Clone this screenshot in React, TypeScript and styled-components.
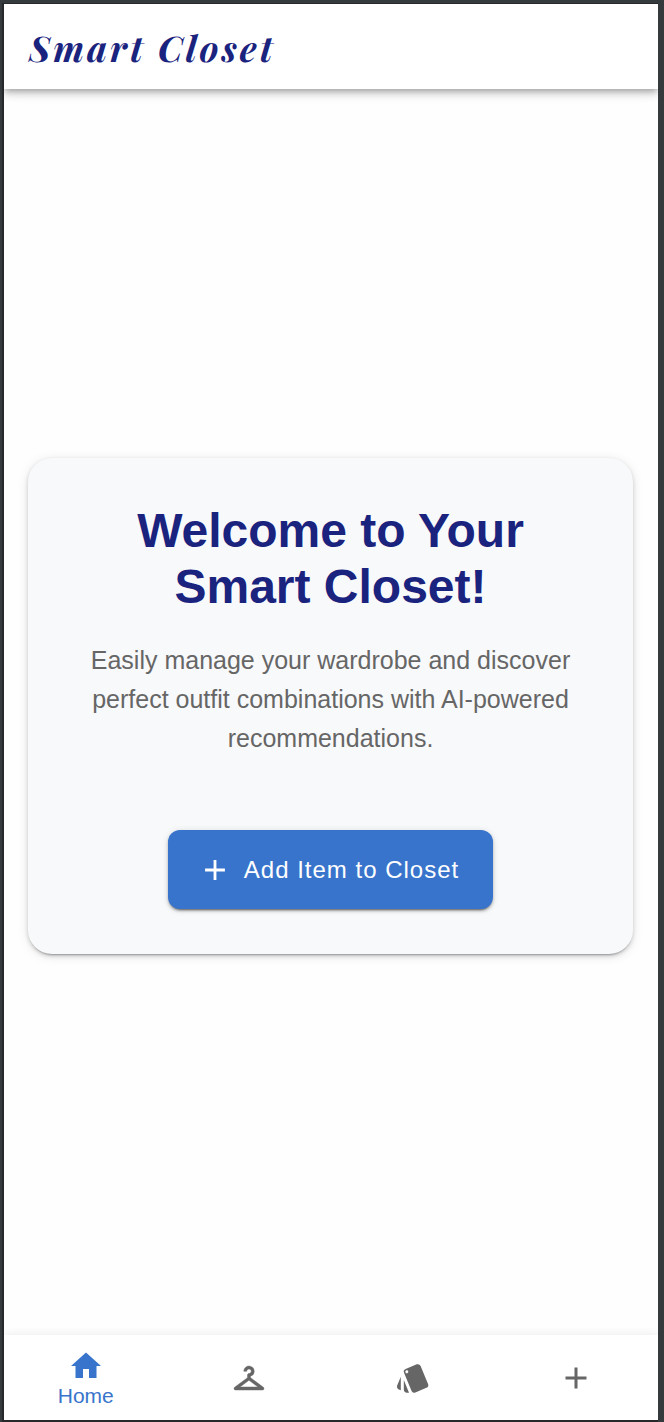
import React from "react";
import styled, { createGlobalStyle } from "styled-components";
import { MdAdd, MdCheckroom, MdHome, MdStyle } from "react-icons/md";

const GlobalStyle = createGlobalStyle`
  *, *::before, *::after { box-sizing: border-box; }
  body {
    margin: 0;
    background: #353a3d;
    font-family: "Liberation Sans", Arial, sans-serif;
  }
`;

const Backdrop = styled.div`
  display: flex;
  min-height: 100vh;
  padding: 3px 6px 0 2px;
`;

const Screen = styled.div`
  display: flex;
  flex: 1;
  flex-direction: column;
  border: solid #272829;
  border-width: 1px 0 2px 2px;
  background: #fefefe;
`;

const Header = styled.header`
  display: flex;
  align-items: center;
  height: 85px;
  padding: 0 25px;
  background: #fff;
  box-shadow: 0 3px 6px -1px rgba(0, 0, 0, 0.26), 0 6px 8px rgba(0, 0, 0, 0.1),
    0 1px 15px rgba(0, 0, 0, 0.08);
  clip-path: inset(0 0 -24px 0);
`;

const Brand = styled.a`
  color: #1a237e;
  font: italic 700 36px/48px "Playfair Display", "Liberation Serif", serif;
  letter-spacing: 3px;
  text-decoration: none;
`;

const Main = styled.main`
  display: flex;
  flex: 1;
  flex-direction: column;
  justify-content: center;
  padding: 24px 25px 36px 24px;
`;

const Card = styled.section`
  display: flex;
  flex-direction: column;
  align-items: center;
  padding: 45px;
  border-radius: 24px;
  background: #f8f9fb;
  text-align: center;
  box-shadow: 0 3px 2px -2px rgba(0, 0, 0, 0.28), 0 2px 4px rgba(0, 0, 0, 0.16),
    0 2px 12px rgba(0, 0, 0, 0.1);
`;

const Title = styled.h1`
  max-width: 420px;
  margin: 0 0 26px;
  color: #1a237e;
  font-size: 48px;
  font-weight: 700;
  line-height: 56px;
`;

const Description = styled.p`
  margin: 0 0 72px;
  color: #666;
  font-size: 25px;
  line-height: 39px;
`;

const AddButton = styled.button`
  display: flex;
  align-items: center;
  gap: 12px;
  min-height: 79px;
  padding: 0 34px 0 30px;
  border: 0;
  border-radius: 12px;
  background: #3874cb;
  color: #fff;
  font: 400 24px/40px "Liberation Sans", Arial, sans-serif;
  letter-spacing: 1px;
  cursor: pointer;
  box-shadow: 0 3px 2px -2px rgba(0, 0, 0, 0.4), 0 2px 3px rgba(0, 0, 0, 0.24),
    0 1px 7px rgba(0, 0, 0, 0.12);
`;

const BottomNav = styled.nav`
  display: flex;
  height: 85px;
  background: #fff;
  box-shadow: 0 -2px 8px rgba(0, 0, 0, 0.06);
  clip-path: inset(-16px 0 0 0);
`;

const NavLink = styled.a<{ $active?: boolean }>`
  display: flex;
  flex: 1;
  flex-direction: column;
  align-items: center;
  justify-content: center;
  color: ${({ $active }) => ($active ? "#3874cb" : "#666")};
  font-size: 21px;
  line-height: 24px;
  text-decoration: none;
`;

const HangerIcon = styled(MdCheckroom)`
  path:not([fill="none"]) {
    stroke: currentColor;
    stroke-width: 0.3;
  }
`;

export default function App() {
  return (
    <>
      <GlobalStyle />
      <Backdrop>
        <Screen>
          <Header>
            <Brand href="#home">Smart Closet</Brand>
          </Header>
          <Main>
            <Card>
              <Title>Welcome to Your Smart Closet!</Title>
              <Description>
                Easily manage your wardrobe and discover perfect outfit
                combinations with AI-powered recommendations.
              </Description>
              <AddButton type="button">
                <MdAdd size={34} aria-hidden />
                Add Item to Closet
              </AddButton>
            </Card>
          </Main>
          <BottomNav aria-label="Primary">
            <NavLink href="#home" $active aria-current="page">
              <MdHome size={36} aria-hidden />
              Home
            </NavLink>
            <NavLink href="#closet" aria-label="Closet">
              <HangerIcon size={36} aria-hidden />
            </NavLink>
            <NavLink href="#outfits" aria-label="Outfits">
              <MdStyle size={36} aria-hidden />
            </NavLink>
            <NavLink href="#add" aria-label="Add item">
              <MdAdd size={36} aria-hidden />
            </NavLink>
          </BottomNav>
        </Screen>
      </Backdrop>
    </>
  );
}
